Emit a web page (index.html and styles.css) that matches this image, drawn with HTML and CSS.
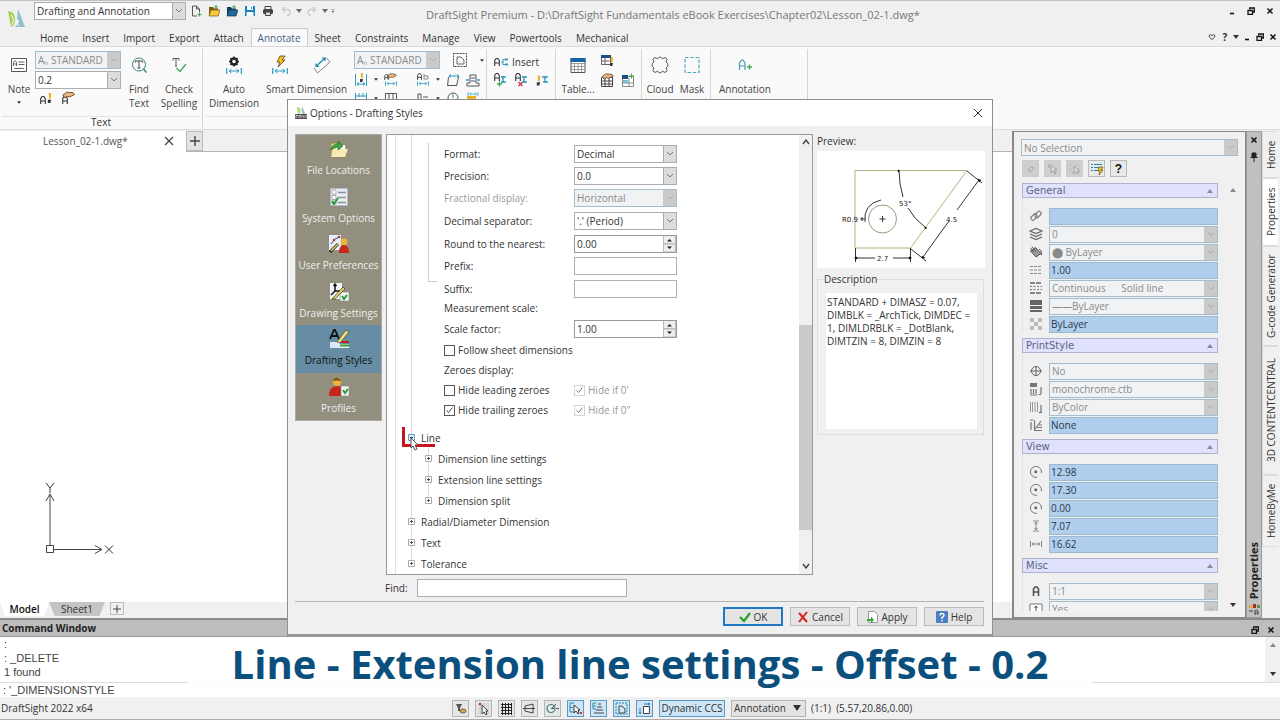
FILE: index.html
```html
<!DOCTYPE html>
<html lang="en">
<head>
<meta charset="utf-8">
<title>DraftSight Premium</title>
<link rel="stylesheet" href="styles.css">
</head>
<body>
<svg class="sprite" aria-hidden="true">
  <symbol id="min" viewBox="0 0 10 10"><path d="M3 7.5h4" stroke="#111" stroke-width="1.6"/></symbol>
  <symbol id="restore" viewBox="0 0 10 10"><path d="M3.7 3.5V2h4.600v4H7M2 4.500h4.500v3.800H2z" fill="none" stroke="#111" stroke-width="1.300"/></symbol>
  <symbol id="close" viewBox="0 0 10 10"><path d="M2.500 2.500l5 5m0-5l-5 5" stroke="#111" stroke-width="1.500"/></symbol>
  <symbol id="dim" viewBox="0 0 16 6"><path d="M.7 0v6M15.300 0v6" stroke="#2d9bc4" stroke-width="1.200"/><path d="M3 3h10M5.500 1L3 3l2.500 2M10.500 1L13 3l-2.500 2" fill="none" stroke="#2d9bc4"/></symbol>
  <symbol id="plusbox" viewBox="0 0 7 7"><path d="M.5.5h6v6h-6z" fill="#fff" stroke="#aaa"/><path d="M2 3.500h3M3.500 2v3" stroke="#555"/></symbol>
  <symbol id="tri" viewBox="0 0 6 4"><path d="M0 0h6L3 4z" fill="#333"/></symbol>
  <symbol id="up" viewBox="0 0 6 4"><path d="M0 4h6L3 0z" fill="#888"/></symbol>
  <symbol id="brush" viewBox="0 0 6 12"><path d="M2 0h3l-.5 7H2.500z" fill="#e8b322"/><path d="M1 8h4l-1 4H1z" fill="#333"/></symbol>
  <symbol id="hand" viewBox="0 0 14 8"><path d="M1 4l4-3 7 .5 1.500 2-5 2.500-3-.5L3 7z" fill="#e6b887" stroke="#5d3b1d" stroke-width=".9"/></symbol>
  <symbol id="letterA" viewBox="0 0 6 8"><path d="M.7 8V2.500l1.500-2h1.600l1.500 2V8M1 5h4" fill="none" stroke="#333" stroke-width="1.100"/></symbol>
  <symbol id="orbit" viewBox="0 0 14 14"><path d="M8 12.300a5.500 5.500 0 1 1 4.300-4" fill="none" stroke="#777"/><circle cx="6.800" cy="6.800" r="1.500" fill="#666"/></symbol>
  <symbol id="logo" viewBox="0 0 18 20"><path d="M1 2l4 1q5 4 2 13l-3 2z" fill="#a6cf55"/><path d="M4 6q4 4 1 10" stroke="#fff" fill="none"/><path d="M11 0l7 18H8l4-5-2-4z" fill="#92bfd0"/><path d="M11 12q-2 3 1 5" stroke="#fff" fill="none"/></symbol>
</svg>
<div class="app">
  <header class="head">
    <svg class="logo"><use href="#logo"/></svg>
    <div class="quick">
      <select class="combo workspace" aria-label="Workspace"><option>Drafting and Annotation</option></select>
      <div class="qicons">
        <button aria-label="New"><svg viewBox="0 0 12 12"><path d="M7 11H2.500V1h4l3 3v3M6.500 1v3h3" fill="none" stroke="#555"/><path d="M7.500 9.500h4M9.500 7.500v4" stroke="#5c9b5c" stroke-width="1.200"/></svg></button>
        <button aria-label="Open"><svg viewBox="0 0 12 12"><path d="M1 11V2h4l1 1.500h4V6" fill="#7a5a10"/><path d="M1 11l2-6h9l-2 6z" fill="#fbc63a" stroke="#7a5a10" stroke-width=".7"/><path d="M8 4V1M6.500 2.500L8 .5l1.500 2" stroke="#3b9c3b" fill="none"/></svg></button>
        <button aria-label="Open from cloud"><svg viewBox="0 0 12 12"><path d="M1 11V2h4l1 1.500h4V6" fill="#123b5b"/><path d="M1 11l2-6h9l-2 6z" fill="#216b9b" stroke="#123b5b" stroke-width=".7"/><path d="M8 4V1M6.500 2.500L8 .5l1.500 2" stroke="#3b9c3b" fill="none"/></svg></button>
        <button aria-label="Save"><svg viewBox="0 0 12 12"><path d="M1 1h10v10H1z" fill="#1881b8"/><path d="M3 1h6v4H3zM2.500 7h7v4h-7z" fill="#f4fbff"/><path d="M7 2h1v2H7z" fill="#1881b8"/></svg></button>
        <button aria-label="Print"><svg viewBox="0 0 12 12"><path d="M3 4V1.500h6V4" fill="none" stroke="#444"/><rect x="1" y="4" width="10" height="5" rx="1.500" fill="#444"/><path d="M3.500 7h5v3.500h-5z" fill="#ddd" stroke="#444"/></svg></button>
        <button aria-label="Undo"><svg viewBox="0 0 12 12"><path d="M5 2L2.500 4.500 5 7M3 4.500h4q3 0 3 3t-3 3" fill="none" stroke="#ccc" stroke-width="1.300"/></svg></button>
        <svg class="mini"><use href="#tri"/></svg>
        <button aria-label="Redo"><svg viewBox="0 0 12 12"><path d="M7 2l2.500 2.500L7 7M9 4.500H5q-3 0-3 3t3 3" fill="none" stroke="#ccc" stroke-width="1.300"/></svg></button>
        <svg class="mini"><use href="#tri"/></svg>
        <svg class="mini" viewBox="0 0 6 6"><path d="M1 1h4" stroke="#333"/><path d="M1 3h4L3 6z" fill="#333"/></svg>
      </div>
      <h1 class="title">DraftSight Premium - D:\DraftSight Fundamentals eBook Exercises\Chapter02\Lesson_02-1.dwg*</h1>
      <div class="wctl">
        <button aria-label="Minimize"><svg><use href="#min"/></svg></button>
        <button aria-label="Restore"><svg><use href="#restore"/></svg></button>
        <button aria-label="Close"><svg><use href="#close"/></svg></button>
      </div>
    </div>
    <nav class="tabs">
      <button>Home</button><button>Insert</button><button>Import</button><button>Export</button><button>Attach</button><button class="on">Annotate</button><button>Sheet</button><button>Constraints</button><button>Manage</button><button>View</button><button>Powertools</button><button>Mechanical</button>
      <div class="hctl">
        <button aria-label="Favorites"><svg viewBox="0 0 10 10"><path d="M5 7.500L2.300 5V3.300l1.400-.7L5 3.700l1.300-1.100 1.400.7V5z" fill="none" stroke="#333" stroke-width=".9"/></svg></button>
        <button class="help" aria-label="Help">?</button>
        <svg class="mini dark"><use href="#tri"/></svg>
        <button aria-label="Minimize drawing"><svg><use href="#min"/></svg></button>
        <button aria-label="Restore drawing"><svg><use href="#restore"/></svg></button>
        <button aria-label="Close drawing"><svg><use href="#close"/></svg></button>
      </div>
    </nav>
  </header>

  <section class="ribbon">
    <div class="group g-text">
      <div class="tools">
        <button class="tool w32"><svg viewBox="0 0 20 20"><path d="M2.500 3.500h15v13h-15z" fill="#fff" stroke="#555"/><path d="M4.500 11V7.500l1-1.500h1l1 1.500V11M5 9h3M9.500 7h6M9.500 9.500h6M5 13.500h10" stroke="#555" fill="none" stroke-width=".9"/></svg><span>Note</span><svg class="drop"><use href="#tri"/></svg></button>
        <div class="stack">
          <select class="combo off style" aria-label="Text style" disabled><option>A&#8341; STANDARD</option></select>
          <select class="combo style" aria-label="Text height"><option>0.2</option></select>
          <div class="row lowrow"><svg class="ic" viewBox="0 0 14 14"><use href="#letterA" x="1" y="5" width="6" height="8"/><use href="#brush" x="8" y="1" width="5" height="12"/></svg><svg class="ic" viewBox="0 0 14 14"><use href="#letterA" x="1" y="5" width="6" height="8"/><use href="#hand" x="1" y="0" width="13" height="8"/></svg></div>
        </div>
        <button class="tool w40"><svg viewBox="0 0 20 20"><circle cx="10" cy="9.500" r="6.500" fill="none" stroke="#34857e"/><path d="M6.500 7.500V6h7v1.500M10 6v7M8.500 13h3" fill="none" stroke="#444"/><path d="M14.500 14l3 3.500" stroke="#34857e" stroke-width="1.400"/></svg><span>Find<br>Text</span></button>
        <button class="tool w40"><svg viewBox="0 0 20 20"><path d="M4 5.500V3.500h6v2M7 3.500V11M6 11h2" fill="none" stroke="#555"/><path d="M7.500 13l3.500 3.500L17 9" fill="none" stroke="#46a35c" stroke-width="1.300"/></svg><span>Check<br>Spelling</span></button>
      </div>
      <div class="caption-row">Text</div>
    </div>
    <div class="group g-dim">
      <div class="tools">
        <button class="tool w60"><svg viewBox="0 0 20 20"><circle cx="10" cy="6.500" r="3" fill="none" stroke="#222" stroke-width="2.400"/><path d="M10 1.500v2M10 9.500v2M5 6.500h2M13 6.500h2M6.500 3l1.400 1.400M12.100 8.600l1.400 1.400M13.500 3l-1.400 1.400M7.900 8.600L6.500 10" stroke="#222" stroke-width="1.500"/><use href="#dim" x="2" y="13" width="16" height="6"/></svg><span>Auto<br>Dimension</span></button>
        <button class="tool w32"><svg viewBox="0 0 20 20"><path d="M10 1h5l-3 4h3l-7 7 2-5H7z" fill="#fbc02d" stroke="#5b4307" stroke-width=".8"/><use href="#dim" x="2" y="13" width="16" height="6"/></svg><span>Smart</span></button>
        <button class="tool w52"><svg viewBox="0 0 20 20"><path d="M2 13l3.500 5L18 7l-4-4.500" fill="none" stroke="#888"/><path d="M4 11.500l9-8.500M4 8.500v3h3M10 3h3v3" fill="none" stroke="#1e86b4" stroke-width="1.200"/></svg><span>Dimension</span></button>
        <div class="stack dimstack">
          <div class="row"><select class="combo off style" aria-label="Dimension style" disabled><option>A&#8341; STANDARD</option></select><svg class="ic big" viewBox="0 0 16 16"><rect x="1.500" y="1.500" width="13" height="13" fill="none" stroke="#444" stroke-dasharray="2 1"/><path d="M5 5h4l3 3v4H5z" fill="none" stroke="#666"/></svg><svg class="drop"><use href="#tri"/></svg></div>
          <div class="row dimrow">
            <svg class="ic" viewBox="0 0 14 14"><path d="M1.500 1v12M12.500 1v12" stroke="#2d9bc4"/><use href="#brush" x="5" y="0" width="5" height="9"/><path d="M3 11h8M5 9.500L3 11l2 1.500M9 9.500l2 1.500-2 1.500" fill="none" stroke="#2d9bc4"/></svg><svg class="drop"><use href="#tri"/></svg>
            <svg class="ic wide" viewBox="0 0 14 14"><use href="#hand" x="1" y="0" width="13" height="6"/><use href="#letterA" x="0" y="1" width="5" height="6"/><use href="#dim" x="1" y="8" width="12" height="5"/></svg>
            <svg class="ic" viewBox="0 0 14 14"><use href="#letterA" x="1" y="0" width="5" height="7"/><path d="M8 1v5h4V3H8" fill="none" stroke="#888"/><use href="#dim" x="1" y="8" width="12" height="5"/></svg><svg class="drop"><use href="#tri"/></svg>
            <svg class="ic" viewBox="0 0 14 14"><path d="M1.500 13l1-9M10.500 13l2-9M2 12.500h9" fill="none" stroke="#555"/><path d="M3 3h10M5 1.500L3 3l2 1.500M11 1.500L13 3l-2 1.500" fill="none" stroke="#2d9bc4"/></svg>
            <svg class="ic" viewBox="0 0 14 14"><path d="M1 10h3V2h6v8h3v3H1zM5 5h4M5 8h4" fill="none" stroke="#555"/><path d="M0 7h3M11 7h3" stroke="#2d9bc4" stroke-width="1.500"/></svg>
          </div>
          <div class="row dimrow">
            <svg class="ic" viewBox="0 0 14 14"><path d="M1.500 1v6M5 1v4M9 1v4M12.500 1v6M2 4h10" stroke="#2d9bc4"/></svg><svg class="drop"><use href="#tri"/></svg>
            <svg class="ic wide" viewBox="0 0 14 14"><path d="M1.500 1.500h11v6h-11zM5 1v6M9 1v6" fill="none" stroke="#555"/></svg>
            <svg class="ic" viewBox="0 0 14 14"><path d="M2 8V2h3v6M7 5h5" fill="none" stroke="#555"/></svg><svg class="drop"><use href="#tri"/></svg>
            <svg class="ic" viewBox="0 0 14 14"><circle cx="7" cy="6" r="5" fill="none" stroke="#555"/><path d="M7 2v4" stroke="#2d9bc4"/></svg>
            <svg class="ic" viewBox="0 0 14 14"><use href="#dim" x="1" y="0" width="12" height="4"/><path d="M1 4h9v5H1z" fill="#e8b322"/></svg>
          </div>
        </div>
      </div>
      <div class="caption-row"></div>
    </div>
    <div class="group g-ins">
      <div class="tools col">
        <button class="inline"><svg class="ic" viewBox="0 0 14 14"><use href="#letterA" x="0" y="3" width="6" height="8"/><path d="M7 7h2M9 4.500h2M9 9.500h2M9 4v6" stroke="#2d9bc4"/><path d="M11 4.500h3M11 9.500h3" stroke="#2d9bc4" stroke-width="2"/></svg>Insert</button>
        <div class="row insrow">
          <svg class="ic" viewBox="0 0 14 14"><use href="#letterA" x="1" y="0" width="6" height="8"/><path d="M8 4h5M8 9h5M10 3v7" stroke="#2d9bc4" stroke-width="1.400"/><path d="M4 11h5M6.500 8.500v5" stroke="#46a35c" stroke-width="1.300"/></svg>
          <svg class="ic" viewBox="0 0 14 14"><use href="#letterA" x="1" y="0" width="6" height="8"/><path d="M8 4h5M8 9h5M10 3v7" stroke="#2d9bc4" stroke-width="1.400"/><path d="M4.500 9l4 4m0-4l-4 4" stroke="#d32f4a" stroke-width="1.300"/></svg>
          <svg class="ic" viewBox="0 0 14 14"><use href="#brush" x="1" y="2" width="5" height="11"/><path d="M7 4h6M8 9h5M10 3v7" stroke="#2d9bc4" stroke-width="1.400"/></svg>
        </div>
      </div>
      <div class="caption-row"></div>
    </div>
    <div class="group g-tab">
      <div class="tools">
        <button class="tool w44"><svg viewBox="0 0 20 20"><path d="M3 3.500h14v14H3z" fill="#fff" stroke="#555"/><path d="M3 8.500h14M3 11.500h14M3 14.500h14M6.500 8v9M10 8v9M13.500 8v9" stroke="#888" stroke-width=".8"/><path d="M2.500 3h15v4h-15z" fill="#1565a8"/></svg><span>Table...</span></button>
        <div class="minigrid">
          <svg class="ic" viewBox="0 0 14 14"><path d="M1.500 2.500h9v9h-9zM1.500 8h8M5 5v6" fill="#fff" stroke="#666"/><path d="M1 2h10v3H1z" fill="#1c4e80"/><use href="#brush" x="9" y="4" width="5" height="9"/></svg><span></span>
          <svg class="ic" viewBox="0 0 14 14"><path d="M1.500 4.500h11v9h-11zM1.500 8h11M1.500 11h11M5 5v8M9 5v8" fill="#fff" stroke="#444"/><use href="#hand" x="1" y="0" width="13" height="7"/></svg>
          <svg class="ic" viewBox="0 0 14 14"><path d="M1.500 3.500h11v10h-11zM1.500 10h11M8 5v8" fill="#fff" stroke="#888"/><path d="M1 2h6v4H1z" fill="#1c4e80"/><path d="M2 7h5v3H2z" fill="#75bfd9"/><path d="M8 3h5M10.500.5v5" stroke="#46a35c"/></svg>
        </div>
      </div>
      <div class="caption-row"></div>
    </div>
    <div class="group g-cloud">
      <div class="tools">
        <button class="tool w32"><svg viewBox="0 0 20 20"><path d="M4 7q-2-3 0-4t3.500 1Q8.500 2 10 2t2.500 2Q14 2 16 3t0 4q2 1 2 3t-2 3q2 3 0 4t-3.500-1Q11.500 18 10 18t-2.500-2Q6 18 4 17t0-4q-2-1-2-3t2-3z" fill="none" stroke="#555"/></svg><span>Cloud</span></button>
        <button class="tool w32"><svg viewBox="0 0 20 20"><rect x="3" y="2.500" width="14" height="15" fill="none" stroke="#4fa6b5" stroke-width="1.200" stroke-dasharray="3.500 1.800"/></svg><span>Mask</span></button>
      </div>
      <div class="caption-row"></div>
    </div>
    <div class="group g-ann">
      <div class="tools">
        <button class="tool w60"><svg viewBox="0 0 20 20"><path d="M4.500 15V8l2-3h1.500l2 3v7M5 11h5" fill="none" stroke="#4a9cb0" stroke-width="1.200"/><path d="M12 12h5M14.500 9.500v5" stroke="#46a35c" stroke-width="1.300"/></svg><span>Annotation</span></button>
      </div>
      <div class="caption-row"></div>
    </div>
  </section>

  <main class="work">
    <section class="drawing">
      <div class="files">
        <div class="file">Lesson_02-1.dwg*<button aria-label="Close file"><svg viewBox="0 0 10 10"><path d="M1 1l8 8m0-8l-8 8" stroke="#444" stroke-width="1.200"/></svg></button></div>
        <button class="addfile" aria-label="New file"><svg viewBox="0 0 10 10"><path d="M0 5h10M5 0v10" stroke="#444" stroke-width="1.400"/></svg></button>
      </div>
      <div class="canvas">
        <svg class="ucs" viewBox="0 0 74 76"><path d="M8 64V14M4 20l4-7 4 7M12 68.500h47M53 64.500l7 4-7 4M4.500 64.500h7v7h-7z" fill="none" stroke="#444"/><path d="M4 2l4 5 4-5M8 7v5M63 64.500l8 8m0-8l-8 8" fill="none" stroke="#333"/></svg>
      </div>
      <div class="sheets">
        <button class="sheet on">Model</button><button class="sheet">Sheet1</button>
        <button class="addsheet" aria-label="Add sheet"><svg viewBox="0 0 10 10"><path d="M1 5h8M5 1v8" stroke="#444"/></svg></button>
      </div>
    </section>

    <aside class="palette">
      <div class="props">
        <select class="combo off" aria-label="Selection" disabled><option>No Selection</option></select>
        <div class="pbtns">
          <button disabled aria-label="Toggle"><svg viewBox="0 0 14 14"><path d="M4 8l3-3 3 1-3 4z" fill="none" stroke="#a9a9a9"/></svg></button>
          <button disabled aria-label="Select"><svg viewBox="0 0 14 14"><path d="M5 3v8l2-2 2 3 1-1-2-3h3zM3 2v4" fill="#ddd" stroke="#a0a0a0"/></svg></button>
          <button disabled aria-label="Select objects"><svg viewBox="0 0 14 14"><path d="M6 4v8l2-2 2 2 1-1-2-2h3z" fill="#ddd" stroke="#a0a0a0"/><path d="M2 2h8v8H2z" fill="none" stroke="#aaa" stroke-dasharray="1 2"/></svg></button>
          <button aria-label="Smart select"><svg viewBox="0 0 14 14"><path d="M1 2.500h2M4 2.500h8M1 5.500h2M4 5.500h6M1 8.500h2M4 8.500h4" stroke="#2587ad" stroke-width="1.200"/><path d="M9 5h4l-2 3h2l-4 5 1-4H8z" fill="#f3c21c" stroke="#665116" stroke-width=".7"/></svg></button>
          <button class="q" aria-label="Help">?</button>
        </div>
        <div class="pscroll">
          <div class="plist">
            <section class="psec">
              <h2>General<svg><use href="#up"/></svg></h2>
              <div class="pbody">
                <label class="prow"><svg viewBox="0 0 14 14"><g fill="none" stroke="#777" stroke-width="1.100"><rect x="1.500" y="6" width="7" height="4" rx="1.500" transform="rotate(-45 5 8)"/><rect x="5.500" y="3.500" width="7" height="4" rx="1.500" transform="rotate(-45 9 5.500)"/></g></svg><input aria-label="Hyperlink" value=""></label>
                <label class="prow"><svg viewBox="0 0 14 14"><path d="M1 4l6-2.500L13 4 7 6.500zM1 7l6 2.500L13 7M1 10l6 2.500L13 10" fill="none" stroke="#666" stroke-width="1.300"/></svg><select class="combo off" disabled aria-label="Layer"><option>0</option></select></label>
                <label class="prow"><svg viewBox="0 0 14 14"><path d="M1.500 6l5-3.500 5.500 6L7 12z" fill="#999" stroke="#555"/><path d="M1.500 3l3 4M3 1.500l4 5M10 4q3 1 2.500 6" fill="none" stroke="#555"/></svg><select class="combo off" disabled aria-label="Line color"><option>&#11044; ByLayer</option></select></label>
                <label class="prow"><svg viewBox="0 0 14 14"><path d="M1 3.500h12M1 7h12M1 10.500h12" stroke="#888" stroke-dasharray="3 1"/></svg><input aria-label="Line scale" value="1.00"></label>
                <label class="prow"><svg viewBox="0 0 14 14"><path d="M1 2h12M1 12h12" stroke="#666" stroke-dasharray="5 1" stroke-width="1.300"/><path d="M1 5.500h12M1 8.500h12" stroke="#777" stroke-dasharray="2 1.500"/></svg><select class="combo off" disabled aria-label="Line style"><option>Continuous &nbsp; &nbsp; &nbsp;Solid line</option></select></label>
                <label class="prow"><svg viewBox="0 0 14 14"><path d="M1 1h12v5H1zM1 7h12v3H1zM1 11h12v2H1z" fill="#666"/></svg><select class="combo off" disabled aria-label="Line weight"><option>&#8212;&#8212;ByLayer</option></select></label>
                <label class="prow"><svg viewBox="0 0 14 14"><path d="M1 1h4v4H1zM9 1h4v4H9zM5 5h4v4H5zM1 9h4v4H1zM9 9h4v4H9z" fill="#bbb"/></svg><input aria-label="Transparency" value="ByLayer"></label>
              </div>
            </section>
            <section class="psec">
              <h2>PrintStyle<svg><use href="#up"/></svg></h2>
              <div class="pbody">
                <label class="prow"><svg viewBox="0 0 14 14"><circle cx="7" cy="7" r="4.500" fill="none" stroke="#666"/><path d="M1 7h12M7 2v10" stroke="#666"/></svg><select class="combo off" disabled aria-label="Annotative"><option>No</option></select></label>
                <label class="prow"><svg viewBox="0 0 14 14"><path d="M1 1h7v4H1z" fill="#777"/><path d="M2 7v5M4.500 7v5M7 7v5M1 13h7M12 5v7M9.500 12.500H12" stroke="#777" stroke-width="1.200"/></svg><select class="combo off" disabled aria-label="Print style table"><option>monochrome.ctb</option></select></label>
                <label class="prow"><svg viewBox="0 0 14 14"><path d="M1.500 2v10M3.500 2v10M6 2v10M8.500 2v10" stroke="#999"/><path d="M12 5v7M10 12.500h2.500" stroke="#555"/></svg><select class="combo off" disabled aria-label="Print style type"><option>ByColor</option></select></label>
                <label class="prow"><svg viewBox="0 0 14 14"><path d="M1 2h3M2 4v8M5.500 2v10M5 12.500h8M6 11l6-8M8 9.500h5M10 7h3" stroke="#777" stroke-width="1.200"/></svg><input aria-label="Print style" value="None"></label>
              </div>
            </section>
            <section class="psec">
              <h2>View<svg><use href="#up"/></svg></h2>
              <div class="pbody">
                <label class="prow"><svg><use href="#orbit"/></svg><input aria-label="Center X" value="12.98"></label>
                <label class="prow"><svg><use href="#orbit"/></svg><input aria-label="Center Y" value="17.30"></label>
                <label class="prow"><svg><use href="#orbit"/></svg><input aria-label="Center Z" value="0.00"></label>
                <label class="prow"><svg viewBox="0 0 14 14"><path d="M4 2h6M4 12h6M7 3v8M5.500 5L7 3l1.500 2M5.500 9L7 11l1.500-2" fill="none" stroke="#888"/></svg><input aria-label="Height" value="7.07"></label>
                <label class="prow"><svg viewBox="0 0 14 14"><path d="M1.500 4v6M12.500 4v6M3 7h8M5 5.500L3 7l2 1.500M9 5.500L11 7 9 8.500" fill="none" stroke="#888"/></svg><input aria-label="Width" value="16.62"></label>
              </div>
            </section>
            <section class="psec">
              <h2>Misc<svg><use href="#up"/></svg></h2>
              <div class="pbody">
                <label class="prow"><svg viewBox="0 0 14 14"><path d="M4.500 12V5L6 3h2l1.500 2v7M5 8h4" fill="none" stroke="#555" stroke-width="1.600"/></svg><select class="combo off" disabled aria-label="Annotation scale"><option>1:1</option></select></label>
                <label class="prow"><svg viewBox="0 0 14 14"><path d="M1 2h12v12H1z" fill="#fff" stroke="#777"/><path d="M7 12V4M5.500 6L7 4l1.500 2" fill="none" stroke="#555"/></svg><select class="combo off" disabled aria-label="UCS icon"><option>Yes</option></select></label>
              </div>
            </section>
          </div>
          <div class="parrows"><svg><use href="#up"/></svg><svg><use href="#tri"/></svg></div>
        </div>
      </div>
      <div class="pbar">
        <button aria-label="Close palette"><svg><use href="#close"/></svg></button>
        <button aria-label="Pin palette"><svg viewBox="0 0 10 10"><path d="M3 1h4v4H3zM1.500 5.500h7M5 5v5" fill="#222" stroke="#222"/></svg></button>
        <span class="vtext pname">Properties</span>
        <svg class="picon" viewBox="0 0 12 12"><path d="M1 2h3v3H1z" fill="#e4a83a"/><path d="M5 1h3v4H5z" fill="#b22"/><path d="M9 2h3v3H9z" fill="#4a9a3a"/><path d="M1 8h4M7 12V8l1-1 2 1v4M7 10h3" fill="none" stroke="#444"/></svg>
      </div>
      <nav class="vtabs">
        <button class="vtext t1">Home</button><button class="vtext t2">Properties</button><button class="vtext t3">G-code Generator</button><button class="vtext t4">3D CONTENTCENTRAL</button><button class="vtext t5">HomeByMe</button>
      </nav>
    </aside>
  </main>

  <section class="command">
    <h2 class="cmdhead">Command Window<span class="wctl"><button aria-label="Float"><svg><use href="#restore"/></svg></button><button aria-label="Close command window"><svg><use href="#close"/></svg></button></span></h2>
    <div class="cmdout">
      <div class="log"><p>:</p><p>: _DELETE</p><p>1 found</p></div>
      <div class="cmdscroll"><svg><use href="#up"/></svg><svg><use href="#tri"/></svg></div>
    </div>
    <input class="cmdin" aria-label="Command" value=": '_DIMENSIONSTYLE">
  </section>

  <footer class="status">
    <span class="ver">DraftSight 2022 x64</span>
    <div class="toggles">
      <button aria-label="Snap settings"><svg viewBox="0 0 15 15"><path d="M3 3h6L7 7v3H5V7z" fill="#555"/><ellipse cx="10" cy="10" rx="3" ry="2" fill="#d4b03c" stroke="#665"/></svg></button>
      <button aria-label="Snap"><svg viewBox="0 0 15 15"><path d="M2 4h11M2 8h11M2 12h11M4 2v11M8 2v11M12 2v11" stroke="#bbb" stroke-dasharray="1 1"/><path d="M6 4v9l2-2 2 3 1-1-1-3h2z" fill="#eee" stroke="#444"/><circle cx="4" cy="3" r="1.300" fill="#c33"/></svg></button>
      <button aria-label="Grid"><svg viewBox="0 0 15 15"><path d="M2 3.500h11M2 6.500h11M2 9.500h11M2 12.500h11M3.500 2v12M6.500 2v12M9.500 2v12M12.500 2v12" stroke="#222"/></svg></button>
      <button aria-label="Ortho"><svg viewBox="0 0 15 15"><path d="M3 5l8-2v9l-8-2zM1 7.500h12" fill="none" stroke="#444"/></svg></button>
      <button aria-label="Polar"><svg viewBox="0 0 15 15"><circle cx="6" cy="7.500" r="4" fill="none" stroke="#3a7f8f" stroke-width="1.200"/><path d="M6 7.500h3M7 7l4-4M11 7.500h3" stroke="#555"/></svg></button>
      <button class="on" aria-label="ESnap"><svg viewBox="0 0 15 15"><path d="M6 2H2v9h4M2 6.500h3" fill="none" stroke="#2587ad"/><path d="M6 4v8l2-2 2 3 1-1-1-3h2z" fill="#fff" stroke="#333"/><circle cx="13" cy="12" r="1.200" fill="#c33"/></svg></button>
      <button class="on" aria-label="ETrack"><svg viewBox="0 0 15 15"><path d="M5 2H2v6h3M2 5h3" fill="none" stroke="#2587ad"/><path d="M7 3h3M6 6h5M5 9h7M3 12h10" stroke="#444"/></svg></button>
      <button class="on" aria-label="Quick input"><svg viewBox="0 0 15 15"><rect x="2" y="2" width="11" height="11" fill="none" stroke="#2587ad" stroke-dasharray="2 1"/><path d="M5 5h3l3 3v4H5z" fill="none" stroke="#444"/></svg></button>
      <button class="on" aria-label="Dynamic input"><svg viewBox="0 0 15 15"><path d="M6.500 5.500h6v7h-6z" fill="#fff" stroke="#444"/><path d="M3 7v6M2 11l1 2 1-2M7 3h6M11 2l2 1-2 1" fill="none" stroke="#2587ad"/></svg></button>
      <button class="on ccs">Dynamic CCS</button>
      <select class="anno" aria-label="Annotation scale"><option>Annotation</option></select>
    </div>
    <span class="coords">(1:1) &nbsp;(5.57,20.86,0.00)</span>
  </footer>

  <div class="subtitle">Line - Extension line settings - Offset - 0.2</div>

  <div class="dialog" role="dialog" aria-label="Options - Drafting Styles">
    <div class="dtitle"><svg class="dlogo" viewBox="0 0 14 14"><use href="#logo" x="2" y="0" width="10" height="10"/><path d="M1 8h12v5H1z" fill="#555"/><path d="M2 12V9.500h2M5 12V9.500h2V12M8 10h2v2M11 10h2v2" fill="none" stroke="#ddd" stroke-width=".8"/></svg>Options - Drafting Styles<button aria-label="Close dialog"><svg viewBox="0 0 10 10"><path d="M1 1l8 8m0-8l-8 8" stroke="#333"/></svg></button></div>
    <div class="dbody">
      <nav class="side">
        <button><svg viewBox="0 0 20 20"><path d="M2 18V4h6l2 2h7v12z" fill="#e2cf8b" stroke="#8d7b3d" stroke-width=".7"/><path d="M7 6h9v7H7z" fill="#fff"/><path d="M2 18l3-8h14l-3 8z" fill="#f7eab2"/><path d="M2 11q1-6 7-6V2l5 5-5 4V8q-4 0-7 3z" fill="#39a845" stroke="#1b6e29" stroke-width=".7"/></svg>File Locations</button>
        <button><svg viewBox="0 0 20 20"><path d="M1 1h18v18H1z" fill="#e9edf0" stroke="#889"/><path d="M3 3h4v4H3zM3 8.500h4v4H3zM3 14h4v3H3z" fill="#fff" stroke="#999" stroke-width=".8"/><path d="M9 5.500h8M9 10.500h8M9 15.500h8" stroke="#8b9399" stroke-width="1.600"/><path d="M3 14l2 3 4-6" fill="none" stroke="#2d9a3e" stroke-width="2"/></svg>System Options</button>
        <button><svg viewBox="0 0 20 20"><path d="M0 1h12v15H0z" fill="#e6f0fa"/><path d="M2 10l4-5 5-2" fill="none" stroke="#446"/><circle cx="5" cy="6" r="1.300" fill="#a33"/><circle cx="10" cy="3" r="1.300" fill="#a33"/><path d="M1 18L9 10" stroke="#222" stroke-width="3"/><path d="M2 17L9 10" stroke="#e7cf62" stroke-width="1.500"/><circle cx="15" cy="8" r="3.500" fill="#edb43c"/><path d="M10 19q0-8 5-8t5 8z" fill="#c9261b"/></svg>User Preferences</button>
        <button><svg viewBox="0 0 20 20"><path d="M1 1h12v16H1z" fill="#eff4f6"/><path d="M6 2v7h6M6 9l-4 4M4.500 4L6 2l1.500 2" fill="none" stroke="#111" stroke-width="1.500"/><path d="M11 10h9v9h-9z" fill="#f0f4ee" stroke="#888" stroke-width=".6"/><path d="M13 14l2 3 3-4" fill="none" stroke="#2d9a3e" stroke-width="2"/><path d="M3 17L14 5l2 2L6 17z" fill="#e7cf62" stroke="#443" stroke-width=".8"/></svg>Drawing Settings</button>
        <button class="on"><svg viewBox="0 0 20 20"><path d="M1 13h10v6H1z" fill="#dbe7fb"/><path d="M11 12h9v2h-9z" fill="#b22"/><path d="M11 15h9v4h-9z" fill="#eee"/><path d="M11 16.500h9" stroke="#3b9b35" stroke-width="2"/><path d="M1 10L5 1h1l4 9M3 7h5" fill="none" stroke="#111" stroke-width="1.800"/><path d="M8 13L17 1l3 2-9 11z" fill="#f2dc72" stroke="#443" stroke-width=".7"/></svg>Drafting Styles</button>
        <button><svg viewBox="0 0 20 20"><circle cx="8" cy="5" r="4" fill="#edb43c"/><path d="M4 4q1-4 5-3 3 1 3 3-4-1-8 0z" fill="#865411"/><path d="M0 19Q0 9 8 9t7 10z" fill="#c9261b"/><path d="M12 9h8v10h-8z" fill="#f0f4ee" stroke="#888" stroke-width=".6"/><path d="M14 13l2 3 3-4" fill="none" stroke="#2d9a3e" stroke-width="2"/></svg>Profiles</button>
      </nav>
      <div class="center">
        <div class="pane">
          <div class="tree">
            <div class="trunk">
              <div class="bracketed">
                <div class="bracket"></div>
                <div class="fields">
                  <label class="frow"><span>Format:</span><select class="combo"><option>Decimal</option></select></label>
                  <label class="frow"><span>Precision:</span><select class="combo"><option>0.0</option></select></label>
                  <label class="frow dim"><span>Fractional display:</span><select class="combo off" disabled><option>Horizontal</option></select></label>
                  <label class="frow"><span>Decimal separator:</span><select class="combo"><option>'.' (Period)</option></select></label>
                  <label class="frow tall"><span>Round to the nearest:</span><input class="box spin" value="0.00"></label>
                  <label class="frow"><span>Prefix:</span><input class="box" value=""></label>
                  <label class="frow tall"><span>Suffix:</span><input class="box" value=""></label>
                </div>
              </div>
              <div class="more">
                <div class="sub">Measurement scale:</div>
                <label class="frow tall"><span>Scale factor:</span><input class="box spin" value="1.00"></label>
                <div class="checks"><label><input type="checkbox">Follow sheet dimensions</label></div>
                <div class="checks">Zeroes display:</div>
                <div class="checks"><label><input type="checkbox">Hide leading zeroes</label><label class="dim"><input type="checkbox" checked disabled>Hide if 0'</label></div>
                <div class="checks"><label><input type="checkbox" checked>Hide trailing zeroes</label><label class="dim"><input type="checkbox" checked disabled>Hide if 0"</label></div>
              </div>
              <ul class="nodes">
                <li class="node"><svg class="exp" viewBox="0 0 7 7"><path d="M.5.5h6v6h-6z" fill="#e4f0fb" stroke="#6c9ac3"/><path d="M2 3.500h3" stroke="#333"/></svg>Line
                  <span class="mark"></span>
                  <svg class="cursor" viewBox="0 0 9 14"><path d="M1 1v10l2-2 2 4 2-1-2-4h3z" fill="#fff" stroke="#555"/></svg>
                </li>
                <li><ul class="kids">
                  <li class="node"><svg class="exp"><use href="#plusbox"/></svg>Dimension line settings</li>
                  <li class="node"><svg class="exp"><use href="#plusbox"/></svg>Extension line settings</li>
                  <li class="node"><svg class="exp"><use href="#plusbox"/></svg>Dimension split</li>
                </ul></li>
                <li class="node"><svg class="exp"><use href="#plusbox"/></svg>Radial/Diameter Dimension</li>
                <li class="node"><svg class="exp"><use href="#plusbox"/></svg>Text</li>
                <li class="node"><svg class="exp"><use href="#plusbox"/></svg>Tolerance</li>
              </ul>
            </div>
          </div>
          <div class="sbar"><svg viewBox="0 0 8 6"><path d="M1 5l3-4 3 4" fill="none" stroke="#444" stroke-width="1.400"/></svg><div class="thumb"></div><svg viewBox="0 0 8 6"><path d="M1 1l3 4 3-4" fill="none" stroke="#444" stroke-width="1.400"/></svg></div>
        </div>
        <label class="find">Find:<input class="box"></label>
      </div>
      <div class="right">
        <div class="plabel">Preview:</div>
        <svg class="preview" viewBox="0 0 168 117">
          <path d="M38 19.500h112L93.500 97H38z" fill="none" stroke="#b3b37f"/>
          <circle cx="65.500" cy="68" r="14" fill="none" stroke="#99997a"/>
          <path d="M62.500 68h6M65.500 65v6M82 19q0 14 4 27M91 57q6 11 18 20M48 71q-2-18 16-22M43 68h5M45 66v4" fill="none" stroke="#333"/>
          <path d="M38.500 97v14M93.500 97v14M38 107h20M76 107h17M150 20l15 12M94 98l15 12M162 29l-22 30M132 70l-26 36" fill="none" stroke="#333"/>
          <path d="M161 28l3 1-2 2zM105 105l3 2-3 0zM81 19h1v2h-1zM108 76l2 1-2 1zM38 106h2v2h-2zM92 106h2v2h-2z" fill="#111" stroke="#111" stroke-width=".5"/>
          <text x="25" y="71">R0.9</text><text x="82" y="55">53°</text><text x="129" y="71">4.5</text><text x="60" y="110">2.7</text>
        </svg>
        <fieldset class="desc"><legend>Description</legend>
          <textarea aria-label="Description" readonly>STANDARD + DIMASZ = 0.07, DIMBLK = _ArchTick, DIMDEC = 1, DIMLDRBLK = _DotBlank, DIMTZIN = 8, DIMZIN = 8</textarea>
        </fieldset>
      </div>
    </div>
    <div class="dfoot">
      <button class="primary"><svg viewBox="0 0 12 12"><path d="M1 6l4 4 6-8" fill="none" stroke="#23a02a" stroke-width="2.200"/></svg>OK</button>
      <button><svg viewBox="0 0 12 12"><path d="M2 2l8 9M10 1L2 11" stroke="#d5231c" stroke-width="2"/></svg>Cancel</button>
      <button><svg viewBox="0 0 12 12"><path d="M2.500.5h6l3 3v8h-9z" fill="#fff" stroke="#999"/><path d="M1 8h4V5.500L8 9l-3 3V10H1z" fill="#3aa53a"/></svg>Apply</button>
      <button><svg viewBox="0 0 12 12"><rect width="12" height="12" rx="1" fill="#4d7fc0"/><path d="M4 4.500q0-2 2-2t2 2q0 1-2 2V8M6 9v1.500" fill="none" stroke="#fff" stroke-width="1.400"/></svg>Help</button>
    </div>
  </div>
</div>
</body>
</html>
```
FILE: styles.css
```css
* { box-sizing: border-box; }
body {
  margin: 0;
  font: 10px/14px "Open Sans", "Noto Sans", sans-serif;
  color: #333;
}
button, input, select, textarea { font: inherit; color: inherit; }
button { margin: 0; padding: 0; border: 0; background: none; }
h1, h2, p, ul { margin: 0; padding: 0; font-weight: 400; list-style: none; }
svg { display: block; flex: none; }
.sprite { position: absolute; width: 0; height: 0; }

.app {
  position: relative;
  display: flex;
  flex-direction: column;
  height: 100vh;
  overflow: hidden;
  background: #f0f0f0;
}

/* Shared form controls */
.combo {
  appearance: none;
  height: 18px;
  width: 100%;
  min-width: 0;
  padding: 0 14px 0 2px;
  border: 1px solid #a9adb0;
  border-radius: 0;
  background: #fff url("data:image/svg+xml,%3Csvg xmlns='http://www.w3.org/2000/svg' width='13' height='18'%3E%3Cpath d='M0 0h13v18H0z' fill='%23dcdcdc'/%3E%3Cpath d='M.5 0v18' stroke='%23aaa'/%3E%3Cpath d='M4 7l3 3 3-3' fill='none' stroke='%23777'/%3E%3C/svg%3E") right center no-repeat;
  overflow: hidden;
}
.combo.off {
  opacity: 1;
  color: #8a8a8a;
  border-color: #a5bccd;
  background-color: #f0f2f4;
  background-image: url("data:image/svg+xml,%3Csvg xmlns='http://www.w3.org/2000/svg' width='13' height='18'%3E%3Cpath d='M0 0h13v18H0z' fill='%23cacaca'/%3E%3Cpath d='M4 7l3 3 3-3' fill='none' stroke='%23aaa'/%3E%3C/svg%3E");
}
.box {
  height: 18px;
  min-width: 0;
  padding: 0 2px;
  border: 1px solid #b0b0b0;
  background: #fff;
}
.spin {
  background: #fff url("data:image/svg+xml,%3Csvg xmlns='http://www.w3.org/2000/svg' width='13' height='18'%3E%3Cpath d='M.5.500h12v8H.5zM.5 9h12v8H.5z' fill='%23eee' stroke='%23bbb'/%3E%3Cpath d='M4 6.500h5L6.500 4zM4 11.500h5L6.500 14z' fill='%23222'/%3E%3C/svg%3E") right center no-repeat;
  border-color: #999;
}

/* Header */
.head {
  display: grid;
  grid-template-columns: 34px 1fr;
  grid-template-rows: 27px 18px;
  border-top: 1px solid #b9c3c8;
  height: 46px;
}
.logo { grid-row: 1 / 3; width: 18px; height: 20px; margin: 8px 0 0 7px; }
.quick { display: flex; align-items: flex-start; padding: 1px 5px 0 0; }
.workspace { width: 152px; }
.qicons { display: flex; align-items: center; gap: 6px; width: 150px; height: 18px; margin-left: 4px; }
.qicons button svg { width: 12px; height: 12px; }
.mini { width: 6px; height: 4px; opacity: .7; }
.qicons .mini { margin: 0 -2px; }
.mini.dark { opacity: 1; }
.title { flex: 1; margin-left: 86px; font-size: 11px; line-height: 25px; color: #777; white-space: nowrap; }
.wctl { display: flex; gap: 9px; padding-top: 4px; }
.wctl svg, .hctl button svg { width: 10px; height: 10px; }
.tabs { display: flex; align-items: stretch; margin-left: -1px; }
.tabs > button { padding: 0 6px; border: 1px solid transparent; border-bottom: 0; color: #333; }
.tabs > .on { color: #3f5f87; border-color: #ccc; background: #fafafa; margin-bottom: -2px; padding-bottom: 2px; }
.hctl { display: flex; align-items: center; gap: 3px; margin-left: auto; padding-right: 2px; }
.help { width: 10px; font-weight: 700; }

/* Ribbon */
.ribbon { display: flex; height: 84px; border-top: 1px solid #d9d9d9; background: #fafafa; border-bottom: 1px solid #ddd; }
.group { display: flex; flex-direction: column; border-right: 1px solid #d5d5d5; margin-top: 2px; overflow: hidden; }
.tools { display: flex; height: 67px; padding-top: 2px; }
.tools.col { flex-direction: column; }
.caption-row { height: 14px; margin: 0 2px; border-top: 1px solid #e2e2e2; line-height: 10px; text-align: center; }
.g-text { width: 203px; }
.g-dim { width: 284px; }
.g-ins { width: 69px; }
.g-tab { width: 86px; }
.g-cloud { width: 69px; }
.g-ann { width: 97px; }
.tool { display: flex; flex-direction: column; align-items: center; padding-top: 4px; color: #444; line-height: 14px; height: 65px; }
.tool > svg:first-child { width: 20px; height: 20px; margin-bottom: 7px; }
.w32 { width: 32px; } .w40 { width: 40px; } .w44 { width: 44px; } .w52 { width: 52px; } .w60 { width: 60px; }
.drop { width: 4px; height: 3px; }
.tool .drop { margin-top: 5px; }
.stack { display: flex; flex-direction: column; gap: 2px; }
.g-text .tools { padding-left: 3px; }
.style { width: 86px; }
.row { display: flex; align-items: center; }
.lowrow { gap: 8px; padding: 0 4px; }
.ic { width: 14px; height: 14px; }
.big { width: 16px; height: 16px; margin: 0 12px 0 12px; }
.dimrow { gap: 6px; height: 17px; }
.dimrow .wide { margin-right: 12px; }
.dimstack { padding-left: 6px; gap: 2px; }
.g-text .stack + .tool { margin-left: -2px; }
.inline { display: flex; align-items: center; gap: 4px; padding: 3px 7px 1px; height: 19px; }
.insrow { gap: 7px; padding: 3px 6px; }
.g-dim .w60 { margin-left: 1px; }
.minigrid { display: grid; grid-template-columns: 14px 14px; gap: 6px 7px; align-content: start; padding-top: 2px; }
.g-cloud .tools { padding-left: 2px; }
.g-ann .w60 { margin-left: 4px; }

/* Drawing area */
.work { display: flex; flex: 1; min-height: 0; }
.drawing { display: flex; flex-direction: column; flex: 1; min-width: 0; margin-bottom: 2px; }
.files { display: flex; height: 22px; padding-top: 1px; background: #f0f0f0; border-bottom: 1px solid #b5b5b5; }
.file { display: flex; justify-content: space-between; width: 186px; margin-bottom: -1px; padding: 3px 12px 0 43px; background: #fff; color: #555; }
.file svg { width: 10px; height: 10px; margin-top: -4px; }
.addfile { display: grid; place-items: center; width: 17px; border: 1px solid #bbb; background: #e3e3e3; }
.addfile svg, .addsheet svg { width: 10px; height: 10px; }
.canvas { display: flex; flex: 1; align-items: flex-end; padding: 0 0 45px 42px; background: #fff; }
.ucs { width: 74px; height: 76px; }
.sheets { display: flex; height: 14px; }
.sheet { width: 56px; line-height: 13px; clip-path: polygon(0 0, 100% 0, 90% 100%, 10% 100%); background: #c4c4c4; }
.sheet.on { width: 49px; background: #fff; color: #111; font-weight: 600; }
.addsheet { display: grid; place-items: center; width: 14px; height: 13px; margin-left: 5px; border: 1px solid #bbb; }

/* Properties palette */
.palette { display: flex; width: 268px; padding-top: 1px; }
.props { flex: 1; min-width: 0; display: flex; flex-direction: column; border: 1px solid #888; border-left-width: 2px; padding: 7px 7px 6px; }
.props > .combo { height: 17px; }
.pbtns { display: flex; gap: 5px; margin: 4px 0 6px 1px; }
.pbtns button { display: grid; place-items: center; width: 17px; height: 17px; border: 1px solid #b9b9b9; background: #e8e8e8; }
.pbtns button:disabled { background: #cfcfcf; border-color: #ccc; }
.pbtns svg { width: 14px; height: 14px; }
.pbtns .q { font: 700 12px/14px "Liberation Sans", sans-serif; color: #111; }
.pscroll { display: flex; flex: 1; min-height: 0; }
.plist { width: 196px; margin-left: 1px; overflow: hidden; }
.parrows { display: flex; flex-direction: column; justify-content: space-between; padding: 5px 0 4px 12px; }
.parrows svg { width: 6px; height: 4px; }
.psec { margin-bottom: 5px; }
.psec h2 { display: flex; justify-content: space-between; align-items: center; height: 15px; padding: 0 4px 0 3px; border: 1px solid #adb3c8; background: #e0e2fd; font: 10px/13px "DejaVu Sans", sans-serif; color: #5c6480; }
.psec h2 svg { width: 6px; height: 4px; }
.pbody { padding: 9px 0 0 6px; border-left: 1px solid #e2e2e2; }
.prow { display: grid; grid-template-columns: 20px 1fr; align-items: center; height: 18px; }
.prow svg { width: 14px; height: 14px; }
.prow .combo { height: 17px; }
.prow input { height: 17px; width: 100%; min-width: 0; padding: 0 1px; border: 1px solid #9db9d1; background: #b1cfed; color: #26384d; }
.pbar { display: flex; flex-direction: column; align-items: center; width: 16px; padding: 3px 0 2px; background: #c0c0c0; border: 1px solid #999; gap: 7px; }
.pbar button svg { width: 10px; height: 10px; }
.vtext { writing-mode: vertical-rl; transform: rotate(180deg); }
.pname { margin-top: auto; margin-bottom: -3px; font-size: 11px; line-height: 14px; font-weight: 700; color: #222; }
.picon { width: 12px; height: 12px; }
.vtabs { display: flex; flex-direction: column; width: 18px; }
.vtabs button { width: 16px; border: 1px solid #ddd; border-left: 0; text-align: center; }
.vtabs .t1 { height: 47px; } .vtabs .t2 { height: 68px; background: #fff; } .vtabs .t3 { height: 100px; }
.vtabs .t4 { height: 129px; } .vtabs .t5 { height: 72px; }

/* Command window */
.cmdhead { display: flex; justify-content: space-between; height: 19px; padding: 0 4px 0 2px; border-top: 2px solid #8a8a8a; border-bottom: 1px solid #999; background: #bdbdbd; font-size: 10px; font-weight: 700; line-height: 17px; color: #222; }
.cmdhead .wctl { gap: 6px; padding-top: 3px; }
.cmdout { display: flex; justify-content: space-between; height: 46px; background: #fff; border-bottom: 1px solid #dcdcdc; font-family: "Liberation Sans", sans-serif; color: #444; }
.log { padding-left: 4px; font-size: 11px; }
.cmdscroll { display: flex; flex-direction: column; justify-content: space-between; align-items: center; width: 15px; padding: 6px 0; background: #f0f0f0; }
.cmdscroll svg { width: 6px; height: 4px; }
.cmdin { display: block; width: 100%; height: 14px; padding: 0 3px; border: 0; background: #fff; font: 11px/14px "Liberation Sans", sans-serif; color: #444; }

/* Status bar */
.status { display: flex; align-items: center; height: 23px; padding-left: 1px; border-bottom: 1px solid #aaa; }
.ver { width: 451px; }
.toggles { display: flex; gap: 6px; }
.toggles button { display: grid; place-items: center; width: 17px; height: 17px; border: 1px solid #b5b5b5; background: #e6e6e6; }
.toggles svg { width: 15px; height: 15px; }
.toggles .on { border-color: #5a9bc4; background: #cde5f7; }
.toggles .ccs { width: 66px; }
.anno { appearance: none; width: 75px; height: 17px; padding: 0 2px; border: 1px solid #b5b5b5; border-radius: 0; background: #e3e3e3 url("data:image/svg+xml,%3Csvg xmlns='http://www.w3.org/2000/svg' width='12' height='6'%3E%3Cpath d='M0 0h8L4 6z' fill='%23333'/%3E%3C/svg%3E") right center no-repeat; }
.coords { margin-left: 5px; }

/* Caption across the bottom */
.subtitle {
  position: absolute;
  left: 188px;
  right: 188px;
  bottom: 23px;
  height: 59px;
  background: rgba(255, 255, 255, .85);
  color: #0b4f7c;
  font: 700 40px/52px "Open Sans", sans-serif;
  text-align: center;
  white-space: nowrap;
}

/* Options dialog */
.dialog { position: absolute; left: 287px; top: 99px; width: 706px; border: 1px solid #8f8f8f; border-bottom: 2px solid #999; background: #f0f0f0; }
.dtitle { display: flex; align-items: center; height: 26px; padding: 0 9px 0 6px; background: #fff; }
.dlogo { width: 14px; height: 14px; margin-right: 2px; }
.dtitle button { margin-left: auto; }
.dtitle button svg { width: 10px; height: 10px; }
.dbody { display: flex; padding: 8px 8px 0 7px; }
.side { display: flex; flex-direction: column; width: 87px; height: 287px; border: 1px solid #aaa; background: #938f7e; }
.side button { flex: 1; display: flex; flex-direction: column; align-items: center; gap: 4px; padding-top: 4px; color: #eee; line-height: 14px; }
.side svg { width: 20px; height: 20px; }
.side .on { background: #668da3; color: #111; }
.center { width: 427px; margin-left: 4px; }
.pane { display: flex; height: 441px; border: 1px solid #999; background: #fff; overflow: hidden; }
.tree { flex: 1; padding-left: 8px; }
.trunk { height: 439px; padding: 8px 0 0 15px; border-left: 1px solid #e0e0e0; background: linear-gradient(#ddd, #ddd) 15px 0 / 1px 430px no-repeat; }
.bracketed { display: flex; padding-left: 17px; gap: 7px; }
.bracket { width: 9px; height: 139px; border-left: 1px solid #ccc; border-bottom: 1px solid #ccc; }
.frow { display: grid; grid-template-columns: 130px 103px; align-items: center; height: 22px; }
.fields .frow:nth-child(4), .frow.tall { height: 23px; }
.dim { color: #999; }
.more { padding-left: 33px; }
.sub { height: 17px; line-height: 17px; }
.checks { display: grid; grid-template-columns: 130px 1fr; align-items: center; height: 20px; }
.checks label { display: flex; align-items: center; gap: 3px; white-space: nowrap; }
.checks input {
  appearance: none;
  width: 11px;
  height: 11px;
  margin: 0;
  border: 1px solid #555;
  background: #fff center no-repeat;
}
.checks input:checked { background-image: url("data:image/svg+xml,%3Csvg xmlns='http://www.w3.org/2000/svg' width='9' height='9'%3E%3Cpath d='M1.500 4.500l2 2 4-5' fill='none' stroke='%23444'/%3E%3C/svg%3E"); }
.checks input:disabled { border-color: #c4c4c4; opacity: .7; }
.nodes { padding: 7px 0 0 1px; }
.node { position: relative; display: flex; align-items: center; gap: 6px; height: 21px; margin-left: -4px; }
.exp { width: 7px; height: 7px; }
.kids { margin-left: 16px; background: linear-gradient(#ddd, #ddd) 0 0 / 1px 50px no-repeat; }
.kids .node { margin-left: -3px; }
.mark { position: absolute; left: -6px; top: 0; width: 33px; height: 20px; border-left: 3px solid #c4161c; border-bottom: 3px solid #c4161c; }
.cursor { position: absolute; left: 2px; top: 10px; width: 9px; height: 14px; }
.sbar { display: flex; flex-direction: column; align-items: center; width: 13px; padding: 4px 0 5px; background: #f0f0f0; }
.sbar svg { width: 8px; height: 6px; }
.thumb { width: 13px; height: 205px; margin-top: auto; margin-bottom: 33px; background: #cbcbcb; }
.find { display: flex; align-items: center; gap: 9px; height: 26px; margin-left: -1px; }
.find .box { width: 210px; }
.right { flex: 1; margin-left: 4px; min-width: 0; }
.plabel { height: 17px; }
.preview { width: 168px; height: 117px; background: #fff; font: 7px "DejaVu Sans", sans-serif; }
.preview text { fill: #222; }
.desc { min-width: 0; height: 163px; margin: 4px 0 0; padding: 0 6px 0 8px; border: 1px solid #ddd; }
.desc legend { height: 14px; padding: 0; margin-left: -2px; }
.desc textarea { display: block; width: 100%; height: 136px; margin-top: 7px; padding: 3px 1px; border: 0; resize: none; background: #fff; font-size: 10px; line-height: 13px; overflow: hidden; }
.dfoot { display: flex; justify-content: flex-end; gap: 7px; margin: 0 8px 0 7px; padding: 5px 0 8px; border-top: 1px solid #b5b5b5; }
.dfoot button { display: flex; align-items: center; justify-content: center; gap: 3px; width: 60px; height: 19px; border: 1px solid #bcbcbc; background: #e4e4e4; }
.dfoot .primary { border: 2px solid #1f78c1; }
.dfoot svg { width: 12px; height: 12px; }
```
